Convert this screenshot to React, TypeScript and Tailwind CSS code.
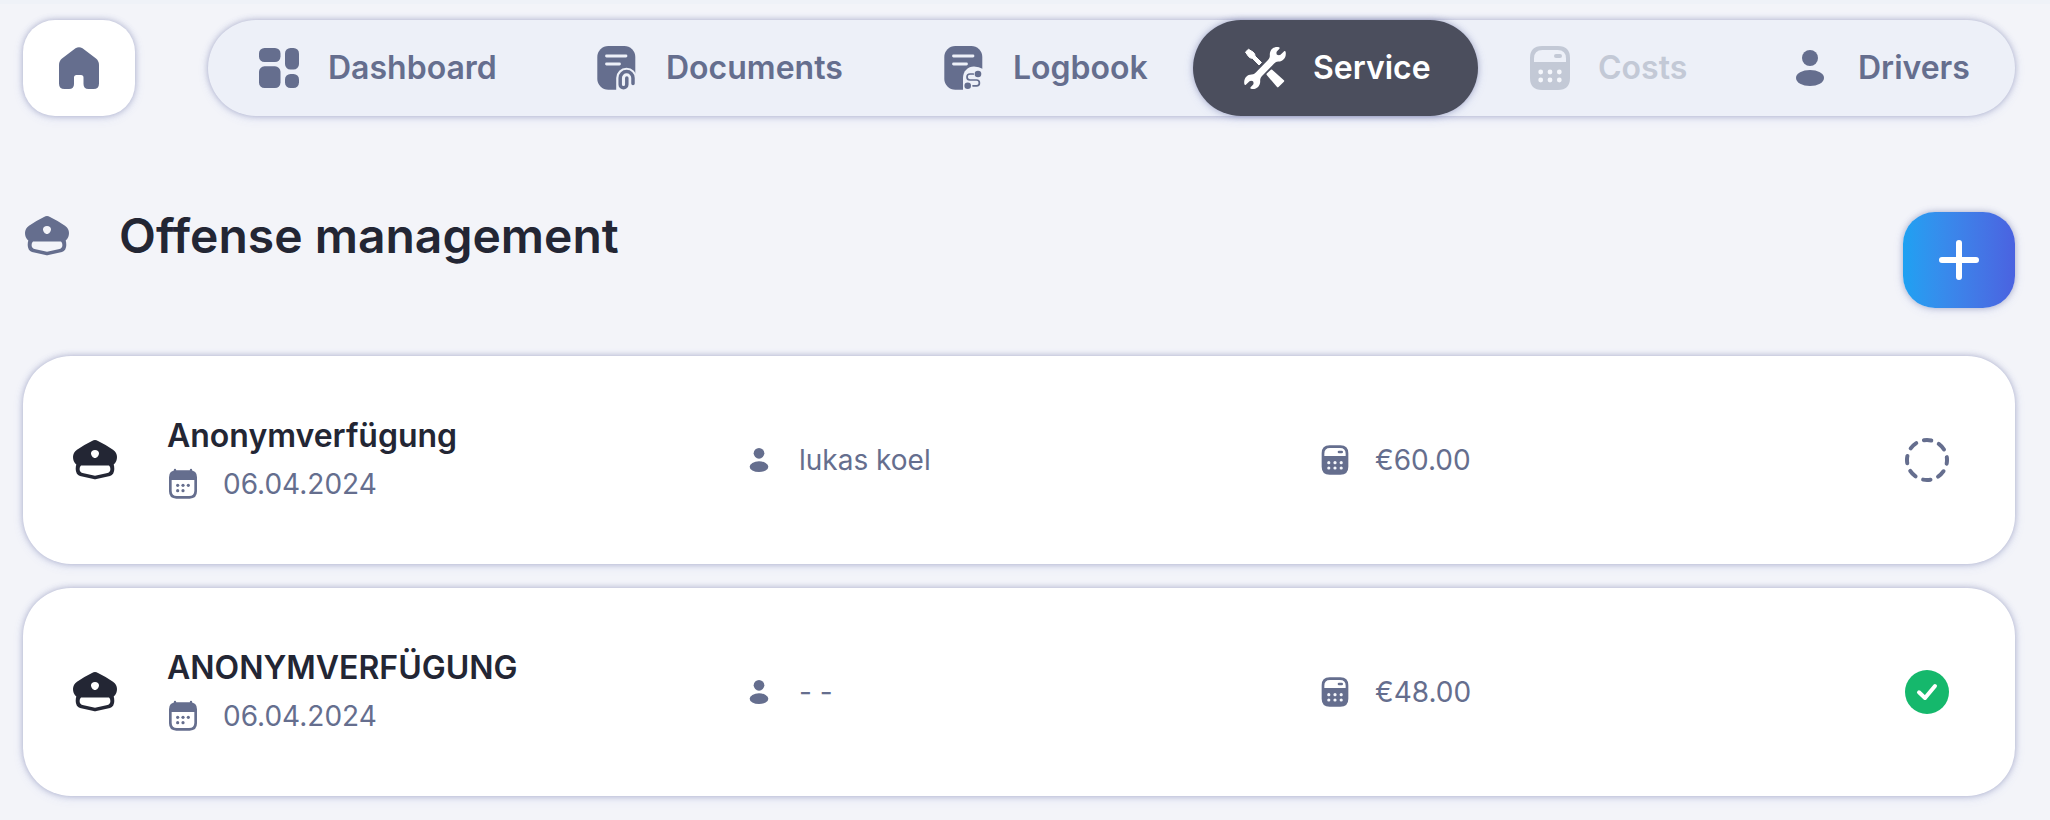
import React from 'react';
import clsx from 'clsx';

type IconProps = { className?: string };

const HomeIcon = ({ className }: IconProps) => (
  <svg viewBox="0 0 48 48" className={className} fill="currentColor" aria-hidden="true">
    <path d="M4 21Q4 17 7 14.5L20.5 4.3Q24 2 27.5 4.3L41 14.5Q44 17 44 21V39.5Q44 45 38.5 45H33.5Q28.5 45 28.5 40V33.5Q28.5 31 26 31H21.5Q19 31 19 33.5V40Q19 45 14 45H9.5Q4 45 4 39.5Z" />
  </svg>
);

const DashboardIcon = ({ className }: IconProps) => (
  <svg viewBox="0 0 48 48" className={className} fill="currentColor" aria-hidden="true">
    <rect x="3" y="4" width="21.5" height="14" rx="5.5" />
    <rect x="29" y="4" width="14" height="21.5" rx="5.5" />
    <rect x="3" y="22.3" width="21.5" height="21.7" rx="5.5" />
    <rect x="29" y="30" width="14" height="14" rx="5.5" />
  </svg>
);

const DocumentIcon = ({ className }: IconProps) => (
  <svg viewBox="0 0 48 48" className={className} fill="none" strokeLinecap="round" aria-hidden="true">
    <rect x="3.3" y="2" width="38" height="43.8" rx="11" fill="currentColor" />
    <path d="M12.5 12H32M12.5 20H25.5" stroke="#edf0f8" strokeWidth="2.8" />
    <path d="M39 50V34a6.5 6.5 0 0 0-13 0V50Z" fill="#edf0f8" stroke="#edf0f8" strokeWidth="7.6" />
    <path d="M39 39.5V34a6.4 6.4 0 0 0-12.8 0V40.5a3.3 3.3 0 0 0 6.6 0V34" stroke="currentColor" strokeWidth="3.5" />
  </svg>
);

const LogbookIcon = ({ className }: IconProps) => (
  <svg viewBox="0 0 48 48" className={className} fill="none" strokeLinecap="round" aria-hidden="true">
    <rect x="3.3" y="2" width="38" height="43.8" rx="11" fill="currentColor" />
    <path d="M12.5 12H32M12.5 20H25.5" stroke="#edf0f8" strokeWidth="2.8" />
    <path d="M22 48V34C22 27 27 22.5 33 22.5Q38 22.5 42 25V48Z" fill="#edf0f8" />
    <circle cx="37" cy="30" r="3.3" fill="currentColor" />
    <circle cx="26.7" cy="41.7" r="3.3" fill="currentColor" />
    <path d="M32.3 30H29a3 3 0 0 0 0 6H35.5a2.9 2.9 0 0 1 0 5.8H32" stroke="currentColor" strokeWidth="1.7" />
  </svg>
);

const ServiceIcon = ({ className }: IconProps) => (
  <svg viewBox="0 0 48 48" className={className} fill="currentColor" aria-hidden="true">
    <path d="M38 3.2C33 2 28.5 5.5 28.8 11C29 13 28.3 14.5 27 16L16.5 26.8C14.5 29 13 30.5 10.5 30.5C6 30.5 2.5 34.5 3.3 39.8Q3.5 41.2 4.6 41L8.5 37.2Q10 36.3 12 37.2Q13 39 12.2 40.5L9.8 43Q8.8 44.5 10 44.8C15 46 19.5 42.5 19.2 37C19 35 19.7 33.5 21 32L31.5 21.2C33.5 19 35 17.5 37.5 17.5C42 17.5 45.5 13.5 44.7 8.2Q44.5 6.8 43.4 7L39.5 10.8Q38 11.7 36 10.8Q35 9 35.8 7.5L38.2 5Q39.2 3.5 38 3.2Z" />
    <path d="M4.5 8L7.5 5.3L12 8Q14.3 9.8 14 12L20.5 18.5L18 21L11.5 14.4Q8.8 14.2 7.5 12.5Z" stroke="currentColor" strokeWidth="1" strokeLinejoin="round" />
    <path d="M26.5 30.3L30.5 26.5L42.2 37L36.8 42.4Z" stroke="currentColor" strokeWidth="2" strokeLinejoin="round" />
  </svg>
);

const CalculatorIcon = ({ className }: IconProps) => (
  <svg viewBox="0 0 48 48" className={className} fill="currentColor" aria-hidden="true">
    <path
      fillRule="evenodd"
      d="M16 2H32Q44 2 44 14V34Q44 46 32 46H16Q4 46 4 34V14Q4 2 16 2ZM8 18H40V14.5Q40 6 31.5 6H16.5Q8 6 8 14.5Z"
    />
    <rect x="28" y="10" width="8" height="4" rx="2" />
    <g className="fill-[#f5f7fc]">
      <circle cx="14.7" cy="28" r="2.4" />
      <circle cx="24" cy="28" r="2.4" />
      <circle cx="33.3" cy="28" r="2.4" />
      <circle cx="14.7" cy="36" r="2.4" />
      <circle cx="24" cy="36" r="2.4" />
      <circle cx="33.3" cy="36" r="2.4" />
    </g>
  </svg>
);

const PersonIcon = ({ className }: IconProps) => (
  <svg viewBox="0 0 48 48" className={className} fill="currentColor" aria-hidden="true">
    <circle cx="24" cy="14" r="8" />
    <ellipse cx="24" cy="34" rx="14" ry="8" />
  </svg>
);

const PoliceCapIcon = ({ className }: IconProps) => (
  <svg viewBox="0 0 48 48" className={className} fill="currentColor" aria-hidden="true">
    <path
      fillRule="evenodd"
      d="M21 5Q24 3.2 27 5Q35 8.8 42 13.8Q46 16.8 46 21Q46 26 42.7 28.5Q43.3 30 43.3 33Q43.3 38.3 39 40L25.5 43Q24 43.5 22.5 43L9 40Q4.7 38.3 4.7 33Q4.7 30 5.3 28.5Q2 26 2 21Q2 16.8 6 13.8Q13 8.8 21 5ZM10 29.4Q8.6 30.5 8.6 33Q8.6 36 11.5 37L24 39.8L36.5 37Q39.4 36 39.4 33Q39.4 30.5 38 29.4ZM24 14C21.5 14 20 15.5 20 17.2C20 19.5 22 22 24 22C26 22 28 19.5 28 17.2C28 15.5 26.5 14 24 14Z"
    />
  </svg>
);

const CalendarIcon = ({ className }: IconProps) => (
  <svg viewBox="0 0 48 48" className={className} fill="currentColor" aria-hidden="true">
    <path
      fillRule="evenodd"
      d="M14 3.5H34Q45 3.5 45 14V35Q45 46 34 46H14Q3 46 3 35V14Q3 3.5 14 3.5ZM7 18V34Q7 42 15 42H33Q41 42 41 34V18Z"
    />
    <path d="M12 3V6M36 3V6" stroke="currentColor" strokeWidth="3.5" strokeLinecap="round" />
    <circle cx="16" cy="26" r="2.4" />
    <circle cx="24" cy="26" r="2.4" />
    <circle cx="32" cy="26" r="2.4" />
    <circle cx="16" cy="34" r="2.4" />
    <circle cx="24" cy="34" r="2.4" />
  </svg>
);

const OpenIcon = ({ className }: IconProps) => (
  <svg viewBox="0 0 48 48" className={className} fill="none" role="img" aria-label="Open">
    <circle cx="24" cy="24" r="20" stroke="currentColor" strokeWidth="4" strokeLinecap="round" strokeDasharray="7.6 8.108" strokeDashoffset="3.8" />
  </svg>
);

const PaidIcon = ({ className }: IconProps) => (
  <svg viewBox="0 0 48 48" className={className} fill="none" role="img" aria-label="Paid">
    <circle cx="24" cy="24" r="22" fill="currentColor" />
    <path d="M16 24.3L22 30L32 18" stroke="white" strokeWidth="4" strokeLinecap="round" strokeLinejoin="round" />
  </svg>
);

const navItems = [
  { label: 'Dashboard', Icon: DashboardIcon },
  { label: 'Documents', Icon: DocumentIcon },
  { label: 'Logbook', Icon: LogbookIcon },
  { label: 'Service', Icon: ServiceIcon, active: true },
  { label: 'Costs', Icon: CalculatorIcon, disabled: true },
  { label: 'Drivers', Icon: PersonIcon },
];

const offenses = [
  { id: 1, title: 'Anonymverfügung', date: '06.04.2024', driver: 'lukas koel', amount: '€60.00', paid: false },
  { id: 2, title: 'ANONYMVERFÜGUNG', date: '06.04.2024', driver: '- -', amount: '€48.00', paid: true },
];

const softShadow = 'shadow-[0_0_6px_rgba(70,75,130,0.4),0_2px_12px_rgba(80,110,220,0.1)]';

function NavItem({ label, Icon, active, disabled }: (typeof navItems)[number]) {
  const classes = clsx(
    'flex h-24 items-center gap-6 rounded-full pl-12 text-[32px] leading-10 font-semibold whitespace-nowrap',
    active && 'bg-[#4b4e5d] text-white',
    active && softShadow,
    disabled && 'text-[#c3c9d6]',
    !active && !disabled && 'text-[#656e8e]'
  );

  if (disabled) {
    return (
      <button type="button" disabled className={classes}>
        <Icon className="size-12 shrink-0" />
        {label}
      </button>
    );
  }

  return (
    <a href="#" className={classes} aria-current={active ? 'page' : undefined}>
      <Icon className="size-12 shrink-0" />
      {label}
    </a>
  );
}

function OffenseCard({ offense }: { offense: (typeof offenses)[number] }) {
  return (
    <li className={clsx('flex items-center rounded-[48px] bg-white py-14 pr-16 pl-12', softShadow)}>
      <PoliceCapIcon className="mr-12 size-12 shrink-0 text-[#232634]" />
      <div className="mr-2 grid flex-1 grid-cols-3 items-center text-[28px] leading-[48px] text-[#656e8e]">
        <div>
          <h2 className="text-[32px] leading-[48px] font-semibold text-[#232634]">{offense.title}</h2>
          <p className="flex items-center gap-6">
            <CalendarIcon className="size-8" />
            {offense.date}
          </p>
        </div>
        <p className="flex items-center gap-6">
          <PersonIcon className="size-8" />
          {offense.driver}
        </p>
        <p className="flex items-center gap-6">
          <CalculatorIcon className="size-8" />
          {offense.amount}
        </p>
      </div>
      {offense.paid ? (
        <PaidIcon className="size-12 shrink-0 text-[#15b86c]" />
      ) : (
        <OpenIcon className="size-12 shrink-0 text-[#656e8e]" />
      )}
    </li>
  );
}

export default function App() {
  return (
    <div className="min-h-screen border-t-4 border-[#eff2f8] bg-[#f3f4f9] pt-4 pr-[35px] pb-6 pl-[23px] font-[Inter,sans-serif]">
      <header className="flex gap-[73px]">
        <a
          href="#"
          aria-label="Home"
          className={clsx('flex h-24 w-28 shrink-0 items-center justify-center rounded-4xl bg-white text-[#656e8e]', softShadow)}
        >
          <HomeIcon className="size-12" />
        </a>
        <nav
          className={clsx(
            'grid flex-1 grid-cols-[338fr_347fr_300fr_285fr_260fr_277fr] rounded-full bg-[#edf0f8]',
            softShadow
          )}
        >
          {navItems.map((item) => (
            <NavItem key={item.label} {...item} />
          ))}
        </nav>
      </header>

      <main className="mt-24">
        <div className="flex items-start justify-between">
          <div className="flex items-center gap-12 text-[#656e8e]">
            <PoliceCapIcon className="size-12" />
            <h1 className="text-5xl font-semibold text-[#232634]">Offense management</h1>
          </div>
          <button
            type="button"
            aria-label="Add offense"
            className={clsx(
              'flex h-24 w-28 items-center justify-center rounded-4xl bg-linear-to-r from-[#1da1f2] to-[#4a62e0] text-white',
              softShadow
            )}
          >
            <svg viewBox="0 0 48 48" className="size-12" fill="none" aria-hidden="true">
              <path d="M24 7V41M7 24H41" stroke="currentColor" strokeWidth="6" strokeLinecap="round" />
            </svg>
          </button>
        </div>

        <ul className="mt-12 flex flex-col gap-6">
          {offenses.map((offense) => (
            <OffenseCard key={offense.id} offense={offense} />
          ))}
        </ul>
      </main>
    </div>
  );
}
